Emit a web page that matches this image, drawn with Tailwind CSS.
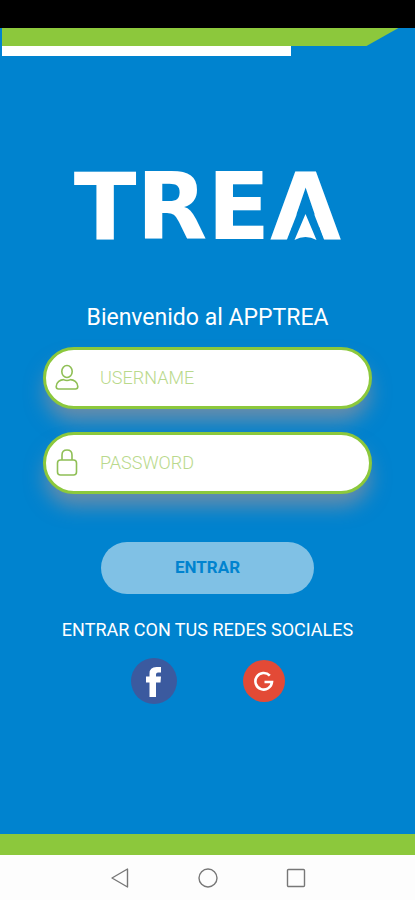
<!DOCTYPE html>
<html lang="es">
<head>
    <meta charset="UTF-8">
    <meta name="viewport" content="width=device-width, initial-scale=1.0">
    <title>APPTREA</title>
    <script src="https://cdn.jsdelivr.net/npm/@tailwindcss/browser@4"></script>
</head>
<body class="bg-[#0083cf] font-[Roboto,sans-serif]">
    <div class="w-full min-h-screen flex flex-col">

        <!-- Status bar -->
        <div class="w-full h-7 bg-black"></div>

        <!-- Top stripes -->
        <header class="pl-[2px]">
            <div class="w-[96%] h-[18px] bg-[#8cc83c] [clip-path:polygon(0_0,100%_0,calc(100%-32px)_100%,0_100%)]"></div>
            <div class="w-[70%] h-[10px] bg-white"></div>
        </header>

        <main class="flex-1 flex flex-col items-center px-[43px] pt-[108px]">

            <!-- Logo -->
            <div class="relative">
                <h1 class="font-['DejaVu_Sans',sans-serif] font-bold text-white text-[92px] leading-[88px]">TREA</h1>
                <!-- peak inside the last letter -->
                <svg class="absolute right-0 bottom-0 w-[71px] h-[88px]" viewBox="0 0 71 88">
                    <path d="M35.5 28L55 78H16Z" fill="#0083cf"/>
                    <path d="M35.5 50L46.500 76Q35.5 70 24.500 76Z" fill="#fff"/>
                </svg>
            </div>

            <h2 class="mt-[51px] text-white text-[23px] leading-[30px]">Bienvenido al APPTREA</h2>

            <!-- Login form -->
            <form class="w-full mt-[14px] flex flex-col items-center">
                <label class="w-full h-[62px] flex items-center pl-2 pr-8 bg-white border-3 border-[#8cc83c] rounded-full shadow-[0_14px_20px_-2px_rgba(150,145,155,0.7)]">
                    <svg class="w-[26px] h-7 shrink-0" viewBox="0 0 26 28" fill="none" stroke="#8fbf55" stroke-width="1.6" stroke-linejoin="round">
                        <ellipse cx="13" cy="7.5" rx="5.2" ry="6"/>
                        <path d="M2.2 22.5C2.2 18 6.5 15.6 9.5 15.6C11.5 16.6 14.5 16.6 16.5 15.6C19.5 15.6 23.8 18 23.8 22.5Q23.8 25 21.5 25H4.5Q2.2 25 2.2 22.5Z"/>
                    </svg>
                    <input type="text" name="username" aria-label="Username" placeholder="USERNAME" class="w-full min-w-0 ml-5 outline-none text-lg font-light text-[#8cc83c] placeholder:text-[#b9d98c]">
                </label>
                <label class="relative w-full h-[62px] mt-[23px] flex items-center pl-2 pr-8 bg-white border-3 border-[#8cc83c] rounded-full shadow-[0_14px_20px_-2px_rgba(150,145,155,0.7)]">
                    <svg class="w-[26px] h-7 shrink-0" viewBox="0 0 26 28" fill="none" stroke="#8fbf55" stroke-width="1.6">
                        <rect x="3.5" y="11" width="19" height="15" rx="3"/>
                        <path d="M8 11V6Q8 1 13 1T18 6V11"/>
                    </svg>
                    <input type="password" name="password" aria-label="Password" placeholder="PASSWORD" class="w-full min-w-0 ml-5 outline-none text-lg font-light text-[#8cc83c] placeholder:text-[#b9d98c]">
                </label>
                <button type="submit" class="w-[65%] h-[52px] mt-12 rounded-full bg-[#80c1e5] text-[#0083cf] text-[17px] font-bold">ENTRAR</button>
            </form>

            <!-- Social login -->
            <p class="mt-6 text-white text-lg leading-6 whitespace-nowrap">ENTRAR CON TUS REDES SOCIALES</p>
            <div class="w-[154px] mt-4 flex items-center justify-between">
                <a href="#" aria-label="Facebook">
                    <svg class="w-[46px] h-[46px]" viewBox="0 0 46 46">
                        <circle cx="23" cy="23" r="23" fill="#3b5a9f"/>
                        <path d="M18.5 39V24.5H15V18.5H18.5V15.5Q18.5 9 25.5 9H30V14.5H27Q25 14.5 25 16.5V18.5H30L29.5 24.5H25V39Z" fill="#fff"/>
                    </svg>
                </a>
                <a href="#" aria-label="Google">
                    <svg class="w-[42px] h-[42px]" viewBox="0 0 42 42">
                        <circle cx="21" cy="21" r="21" fill="#e34a36"/>
                        <path d="M26.8 15.6A8.3 8.3 0 1 0 29 22H21.500" fill="none" stroke="#fff" stroke-width="2.6"/>
                    </svg>
                </a>
            </div>
        </main>

        <div class="w-full h-[21px] bg-[#8cc83c]"></div>

        <!-- Navigation bar -->
        <nav class="w-full h-[45px] bg-[#fdfdfd] flex items-center justify-center gap-[68px]">
            <button type="button" aria-label="Back">
                <svg class="w-5 h-5" viewBox="0 0 20 20" fill="none" stroke="#777" stroke-width="1.4" stroke-linejoin="round"><path d="M17.5 1V19L2 10Z"/></svg>
            </button>
            <button type="button" aria-label="Home">
                <svg class="w-5 h-5" viewBox="0 0 20 20" fill="none" stroke="#777" stroke-width="1.4"><circle cx="10" cy="10" r="9"/></svg>
            </button>
            <button type="button" aria-label="Recent apps">
                <svg class="w-5 h-5" viewBox="0 0 20 20" fill="none" stroke="#777" stroke-width="1.4"><rect x="1.5" y="1.5" width="17" height="17" rx="1"/></svg>
            </button>
        </nav>

    </div>
</body>
</html>
